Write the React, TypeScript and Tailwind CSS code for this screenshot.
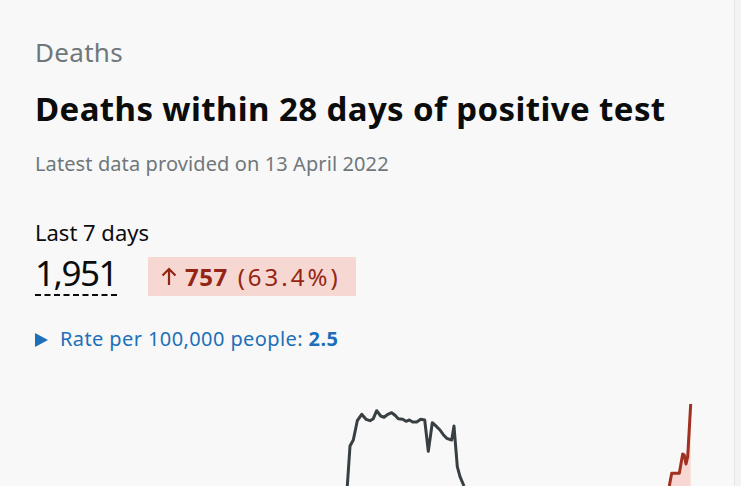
const dark = [
  [347.3, 486], [350, 446], [353.3, 440], [357.3, 420.7], [361.7, 414.3], [366, 419.3], [370, 420.7],
  [373.3, 418.7], [376.7, 410.7], [380.7, 416], [384, 417.3], [387.3, 414.7], [391.7, 412.7],
  [395, 415.3], [398.3, 418.7], [402.7, 419.3], [406, 421.3], [409.3, 420], [412.7, 422],
  [416.7, 422], [420.7, 419.3], [424.7, 420], [428.3, 451.3], [432.3, 422.7], [436.7, 426.7],
  [440, 430], [443.3, 434.7], [446.7, 438.3], [451.7, 440], [454, 426], [457.3, 466.7],
  [460, 476.7], [464, 486],
];

const red = [
  [669.3, 486], [671.7, 473.3], [679.3, 473.3], [682.7, 454], [684.3, 455], [686, 464],
  [687.7, 456.7], [690.7, 404],
];

function pts(list: number[][]) {
  return list.map(([x, y]) => `${x},${y - 380}`).join(' ');
}

export default function App() {
  const redFill = pts(red) + ' 690.7,106 669.3,106';

  return (
    <div className="h-[486px] w-[741px] overflow-hidden bg-[#f3f3f3]">
      <div className="h-full w-[735px] border-r border-[#e6e6e6] bg-[#f8f8f8] font-['Noto_Sans',sans-serif]">
        <div className="h-[380px] px-[35px] pt-[36px]">
          <p className="text-[26px] leading-[32px] tracking-[0.3px] text-[#6f777b]">Deaths</p>
          <h1 className="mt-[21px] text-[33px] font-bold leading-[40px] tracking-[0.4px] text-[#0b0c0c]">
            Deaths within 28 days of positive test
          </h1>
          <p className="mt-[22px] text-[20px] leading-[26px] tracking-[0.1px] text-[#6f777b]">
            Latest data provided on 13 April 2022
          </p>

          <p className="mt-[41px] text-[22px] leading-[28px] text-[#0b0c0c]">Last 7 days</p>
          <div className="mt-[9px] flex items-start gap-[31px]">
            <span className="border-b-2 border-dashed border-[#0b0c0c] pb-[3px] text-[35px] font-normal leading-[36px] tracking-[-1.5px] text-[#0b0c0c]">
              1,951
            </span>
            <span className="mt-[2px] flex h-[39px] items-center bg-[#f6d7d2] pl-[13px] pr-[15px] text-[24px] leading-[28px] text-[#942514]">
              <svg className="mr-[8px]" width="16" height="19" viewBox="0 0 16 19">
                <path d="M8 18 V2 M1.5 8.5 L8 2 L14.5 8.5" fill="none" stroke="#942514" strokeWidth="2.2" />
              </svg>
              <span className="mr-[10px] font-bold tracking-[0.5px]">757</span>
              <span className="tracking-[3px]">(63.4%)</span>
            </span>
          </div>

          <div className="mt-[30px] flex items-center gap-[12px] text-[20px] leading-[26px] tracking-[0.4px] text-[#1d70b8]">
            <svg className="mt-[2px]" width="13" height="14" viewBox="0 0 13 14">
              <path d="M0 0 L13 7 L0 14 Z" fill="#1d70b8" />
            </svg>
            <span>
              Rate per 100,000 people: <b>2.5</b>
            </span>
          </div>
        </div>

        <svg className="block" width="735" height="106" viewBox="0 0 735 106">
          <polyline points={pts(dark)} fill="none" stroke="#383f43" strokeWidth="3" strokeLinejoin="round" />
          <polygon points={redFill} fill="#f6d7d2" />
          <polyline points={pts(red)} fill="none" stroke="#a0301f" strokeWidth="3" strokeLinejoin="round" />
        </svg>
      </div>
    </div>
  );
}
